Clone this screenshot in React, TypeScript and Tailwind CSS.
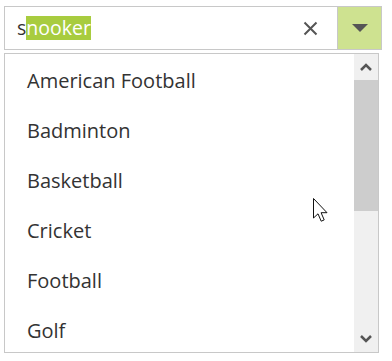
import React from "react";

const sports = ["American Football", "Badminton", "Basketball", "Cricket", "Football", "Golf"];

function Cursor() {
  return (
    <svg
      className="absolute left-[312px] top-[197px] pointer-events-none"
      width="20"
      height="28"
      viewBox="0 0 20 28"
    >
      <path
        d="M1.5 1.5 L1.5 21 L6 16.8 L9.2 24.2 L12.2 22.9 L9.1 15.7 L15 15.7 Z"
        fill="#fff"
        stroke="#111"
        strokeWidth="1"
        strokeLinejoin="miter"
      />
    </svg>
  );
}

export default function App() {
  return (
    <div
      className="relative w-[392px] h-[361px] bg-white overflow-hidden"
      style={{ fontFamily: '"Open Sans", "Noto Sans", sans-serif' }}
    >
      <div className="pt-[6px] pl-[4px]">
        <div className="w-[378px] h-[44px] border border-[#c8c8c8] flex bg-white">
          <div className="flex-1 flex items-center pl-[12px] text-[19.5px] text-[#333]">
            <span className="leading-[24px]">s</span>
            <span className="leading-[24px] bg-[#a8cc3f] text-white">nooker</span>
          </div>
          <div className="w-[54px] flex items-center justify-center">
            <svg width="15" height="15" viewBox="0 0 15 15">
              <path d="M1.5 1.5 L13.5 13.5 M13.5 1.5 L1.5 13.5" stroke="#555" strokeWidth="2" />
            </svg>
          </div>
          <div className="w-[44px] border-l border-[#c8c8c8] bg-[#cee290] flex items-center justify-center">
            <svg width="16" height="9" viewBox="0 0 16 9">
              <path d="M0 0 L16 0 L8 8 Z" fill="#555" />
            </svg>
          </div>
        </div>
        <div className="mt-[3px] w-[375px] h-[300px] border border-[#c8c8c8] flex bg-white">
          <div className="flex-1 flex flex-col pt-[2px]">
            {sports.map((s) => (
              <div
                key={s}
                className="h-[50px] shrink-0 flex items-center pl-[22px] text-[20px] text-[#333]"
              >
                {s}
              </div>
            ))}
          </div>
          <div className="w-[24px] bg-[#f0f0f0] flex flex-col">
            <div className="h-[26px] flex items-center justify-center">
              <svg width="12" height="8" viewBox="0 0 12 8">
                <path d="M1 7 L6 2 L11 7" fill="none" stroke="#555" strokeWidth="2.5" />
              </svg>
            </div>
            <div className="h-[131px] bg-[#cdcdcd]" />
            <div className="flex-1" />
            <div className="h-[26px] flex items-center justify-center">
              <svg width="12" height="8" viewBox="0 0 12 8">
                <path d="M1 1 L6 6 L11 1" fill="none" stroke="#555" strokeWidth="2.5" />
              </svg>
            </div>
          </div>
        </div>
      </div>
      <Cursor />
    </div>
  );
}
